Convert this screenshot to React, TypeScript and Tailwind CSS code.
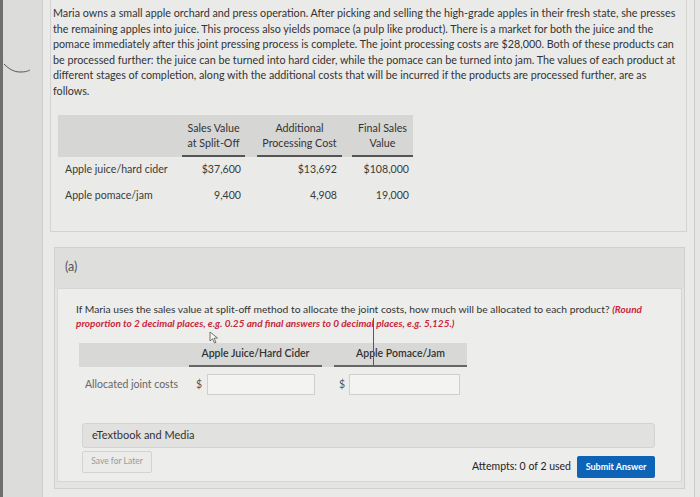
import React from "react";

const paraLines = [
  "Maria owns a small apple orchard and press operation. After picking and selling the high-grade apples in their fresh state, she presses",
  "the remaining apples into juice. This process also yields pomace (a pulp like product). There is a market for both the juice and the",
  "pomace immediately after this joint pressing process is complete. The joint processing costs are $28,000. Both of these products can",
  "be processed further: the juice can be turned into hard cider, while the pomace can be turned into jam. The values of each product at",
  "different stages of completion, along with the additional costs that will be incurred if the products are processed further, are as",
  "follows.",
];

export default function App() {
  return (
    <div className="relative flex h-[497px] w-[700px] overflow-hidden bg-[#e6e6e4] font-['Lato','Liberation_Sans',sans-serif] text-[#363636]">
      {/* left strip */}
      <div className="relative h-full w-[42px] shrink-0 border-l-[3px] border-[#6f6f6d] bg-[#dcdcda]">
        <svg className="absolute left-[0px] top-[60px]" width="30" height="16" viewBox="0 0 30 16">
          <path d="M1 4 C 6 9, 11 12, 17 12 S 25 11, 27 10" fill="none" stroke="#555" strokeWidth="1" />
        </svg>
      </div>

      {/* main panel */}
      <div className="flex h-full w-[653px] shrink-0 flex-col border-l border-r border-[#cdcdcb] bg-[#eaeae8] pl-[7px]">
        {/* top card */}
        <div className="w-[637px] border-b border-l border-r border-[#d3d3d1] pb-[22px] pl-[2px] pt-[5px]">
          <div className="text-[10.75px] leading-[15.6px] text-[#333]">
            {paraLines.map((l, i) => (
              <span key={i} className="block whitespace-nowrap">
                {l}
              </span>
            ))}
          </div>

          <div className="ml-[5px] mt-[16px] w-[355px]">
            <div className="grid h-[42px] grid-cols-[124px_63px_12px_85px_10px_61px] bg-[#d6d6d4] text-[10.7px] leading-[15px] text-[#333]">
              <div />
              <div className="flex flex-col items-center justify-center border-b-2 border-[#555] text-center whitespace-nowrap">
                <span>Sales Value</span>
                <span>at Split-Off</span>
              </div>
              <div />
              <div className="flex flex-col items-center justify-center border-b-2 border-[#555] text-center whitespace-nowrap">
                <span>Additional</span>
                <span>Processing Cost</span>
              </div>
              <div />
              <div className="flex flex-col items-center justify-center border-b-2 border-[#555] text-center whitespace-nowrap">
                <span>Final Sales</span>
                <span>Value</span>
              </div>
            </div>
            {[
              ["Apple juice/hard cider", "$37,600", "$13,692", "$108,000"],
              ["Apple pomace/jam", "9,400", "4,908", "19,000"],
            ].map((r, i) => (
              <div
                key={i}
                className="grid h-[26px] grid-cols-[124px_63px_12px_85px_10px_61px] items-center text-[10.6px] text-[#3a3a3a]"
              >
                <div className="whitespace-nowrap pl-[7px]">{r[0]}</div>
                <div className="pr-[4px] text-right">{r[1]}</div>
                <div />
                <div className="pr-[5px] text-right">{r[2]}</div>
                <div />
                <div className="pr-[4px] text-right">{r[3]}</div>
              </div>
            ))}
          </div>
        </div>

        {/* section (a) */}
        <div className="ml-[4px] mt-[15px] w-[631px] border border-[#d0d0ce] bg-[#e4e4e2]">
          <div className="flex h-[40px] items-center bg-[#dededc] pl-[10px] text-[12.5px] text-[#555]">(a)</div>
          <div className="mx-[2px] mb-[6px] border border-[#d6d6d4] bg-[#ededeb] pb-[3px] pt-[13px]">
            <div className="pl-[18px] text-[10.3px] leading-[14px] text-[#333]">
              <span className="block whitespace-nowrap">
                If Maria uses the sales value at split-off method to allocate the joint costs, how much will be allocated to each product?{" "}
                <span className="text-[10px] font-bold italic text-[#c8283c]">(Round</span>
              </span>
              <span className="block whitespace-nowrap text-[10px] font-bold italic text-[#c8283c]">
                proportion to 2 decimal places, e.g. 0.25 and final answers to 0 decimal places, e.g. 5,125.)
              </span>
            </div>

            {/* answer table */}
            <div className="ml-[21px] mt-[13px] w-[388px]">
              <div className="grid h-[24px] grid-cols-[110px_133px_12px_133px] bg-[#d8d8d6] text-[10.5px] font-semibold text-[#333]">
                <div />
                <div className="flex items-center justify-center border-b-2 border-[#666] whitespace-nowrap">Apple Juice/Hard Cider</div>
                <div />
                <div className="flex items-center justify-center border-b-2 border-[#666] whitespace-nowrap">Apple Pomace/Jam</div>
              </div>
              <div className="mt-[7px] grid h-[22px] grid-cols-[110px_133px_12px_133px] items-center text-[10.5px]">
                <div className="whitespace-nowrap pl-[6px] text-[#666]">Allocated joint costs</div>
                <div className="flex items-center pl-[7px]">
                  <span className="w-[11px] text-[#555]">$</span>
                  <div className="h-[21px] w-[108px] border border-[#cfcfcd] bg-[#f3f3f1]" />
                </div>
                <div />
                <div className="flex items-center pl-[5px]">
                  <span className="w-[10px] text-[#555]">$</span>
                  <div className="h-[21px] w-[111px] border border-[#cfcfcd] bg-[#f3f3f1]" />
                </div>
              </div>
            </div>

            {/* eTextbook */}
            <div className="ml-[24px] mt-[27px] flex h-[25px] w-[573px] items-center rounded-[3px] border border-[#d3d3d1] bg-[#e1e1df] pl-[9px] text-[11px] text-[#333]">
              eTextbook and Media
            </div>

            {/* bottom row */}
            <div className="ml-[24px] mt-[3px] flex w-[573px] items-start justify-between">
              <div className="flex h-[22px] w-[70px] items-center justify-center rounded-[2px] border border-[#d3d3d1] bg-[#ebebe9] text-[8.5px] text-[#9a9a98]">
                Save for Later
              </div>
              <div className="mt-[5px] flex items-center gap-[6px]">
                <span className="whitespace-nowrap text-[10.5px] text-[#222]">Attempts: 0 of 2 used</span>
                <div className="flex h-[22px] w-[78px] items-center justify-center rounded-[2px] bg-[#0d63b5] text-[9px] font-bold text-white">
                  Submit Answer
                </div>
              </div>
            </div>
          </div>
        </div>
      </div>

      {/* overlays: mouse pointer and text cursor */}
      <svg className="absolute left-[209px] top-[331px]" width="12" height="14" viewBox="0 0 12 14">
        <path d="M1 1 L1 10 L3.5 7.8 L5.5 12 L7 11.3 L5 7.2 L8.5 7 Z" fill="#f4f4f2" stroke="#555" strokeWidth="0.8" />
      </svg>
      <div className="absolute left-[373px] top-[318px] h-[48px] w-px bg-[#5a5a5a]" />
    </div>
  );
}
